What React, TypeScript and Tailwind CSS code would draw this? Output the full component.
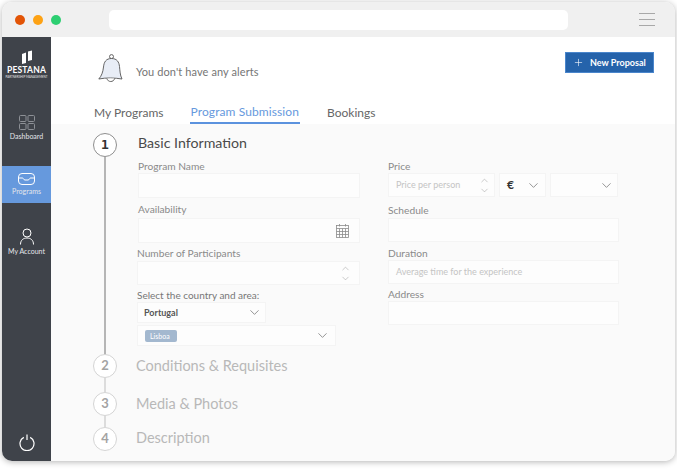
import { ChevronDown, ChevronUp, Plus } from "lucide-react";

const font = "font-['Lato','Noto_Sans',sans-serif]";

function Label({ children, className = "" }: { children: React.ReactNode; className?: string }) {
  return <p className={`text-[10.2px] leading-[14px] text-[#8a8a8a] ${className}`}>{children}</p>;
}

function Box({ className = "", children }: { className?: string; children?: React.ReactNode }) {
  return (
    <div className={`flex items-center bg-[#fdfdfd] border border-[#f4f4f4] ${className}`}>{children}</div>
  );
}

function Spinner() {
  return (
    <div className="flex flex-col ml-auto text-[#8f8f8f]">
      <ChevronUp size={11} strokeWidth={1} className="-mb-[1px]" />
      <ChevronDown size={11} strokeWidth={1} />
    </div>
  );
}

function Caret({ className = "" }: { className?: string }) {
  return <ChevronDown size={15} strokeWidth={1} className={`ml-auto text-[#555] ${className}`} />;
}

function StepCircle({ n, active }: { n: number; active?: boolean }) {
  return (
    <div
      className={
        active
          ? "w-[24px] h-[24px] rounded-full border border-[#8f8f8f] bg-white flex items-center justify-center text-[13px] font-bold text-[#333] font-['DejaVu_Sans_Mono',monospace] shrink-0"
          : "w-[24px] h-[24px] rounded-full border border-[#d4d4d4] bg-white flex items-center justify-center text-[13px] font-bold text-[#a3a3a3] shrink-0"
      }
    >
      {n}
    </div>
  );
}

function NavItem({ label, icon, active }: { label: string; icon: React.ReactNode; active?: boolean }) {
  return (
    <div
      className={`flex flex-col items-center justify-center w-full h-[37px] text-[7px] leading-[9px] text-[#e4e6ea] ${
        active ? "bg-[#6699dd]" : ""
      }`}
    >
      {icon}
      <span className="mt-[2px]">{label}</span>
    </div>
  );
}

export default function App() {
  return (
    <div className={`w-[677px] h-[470px] bg-white pt-[2px] px-[2px] ${font}`}>
      <div className="w-[673px] h-[459px] rounded-[10px] overflow-hidden flex flex-col shadow-[0_1px_6px_rgba(0,0,0,0.3)]">
        {/* barra do browser */}
        <div className="h-[35px] bg-[#f0f0f0] flex items-center pl-[13px] pr-[20px] shrink-0">
          <div className="flex gap-[8px]">
            <span className="w-[10px] h-[10px] rounded-full bg-[#e25406]" />
            <span className="w-[10px] h-[10px] rounded-full bg-[#fda214]" />
            <span className="w-[10px] h-[10px] rounded-full bg-[#2dcf72]" />
          </div>
          <div className="w-[459px] h-[20px] bg-white rounded-[5px] ml-[48px]" />
          <div className="ml-auto flex flex-col gap-[5px] w-[16px]">
            <span className="h-px bg-[#a8a8a8]" />
            <span className="h-px bg-[#a8a8a8]" />
            <span className="h-px bg-[#a8a8a8]" />
          </div>
        </div>

        <div className="flex flex-1 min-h-0">
          {/* sidebar */}
          <div className="w-[49px] bg-[#3f434a] flex flex-col items-center shrink-0">
            <svg width="14" height="14" viewBox="0 0 14 14" className="mt-[13px]" fill="#fff">
              <path d="M2 4 L6 2.6 V13 L2 14 Z" />
              <path d="M8 1.6 L12 0.4 V10 L8 11 Z" />
            </svg>
            <p className="text-[8.5px] leading-[9px] font-bold text-white tracking-[0.2px] mt-[2px]">PESTANA</p>
            <p className="text-[3px] leading-[4px] text-[#e5e5e5] whitespace-nowrap">PARTNERSHIP MANAGEMENT</p>

            <div className="w-full mt-[30px]">
              <NavItem
                label="Dashboard"
                icon={
                  <svg width="16" height="15" viewBox="0 0 16 15" fill="none" stroke="#8d9096" strokeWidth="1">
                    <rect x="0.5" y="0.5" width="6.5" height="6" rx="1" />
                    <rect x="9" y="0.5" width="6.5" height="6" rx="1" />
                    <rect x="0.5" y="8.5" width="6.5" height="6" rx="1" />
                    <rect x="9" y="8.5" width="6.5" height="6" rx="1" />
                  </svg>
                }
              />
            </div>
            <div className="w-full mt-[20px]">
              <NavItem
                active
                label="Programs"
                icon={
                  <svg width="17" height="12" viewBox="0 0 17 12" fill="none" stroke="#fff" strokeWidth="1">
                    <rect x="0.5" y="0.5" width="16" height="11" rx="3.5" />
                    <path d="M1 5 H4.5 C5.5 5 5.5 7 7 7 H10 C11.5 7 11.5 5 12.5 5 H16" />
                  </svg>
                }
              />
            </div>
            <div className="w-full mt-[20px]">
              <NavItem
                label="My Account"
                icon={
                  <svg width="14" height="17" viewBox="0 0 14 17" fill="none" stroke="#fff" strokeWidth="1">
                    <circle cx="7" cy="5" r="4" />
                    <path d="M0.5 16.5 C0.5 12 3.5 10 7 10 C10.5 10 13.5 12 13.5 16.5" />
                  </svg>
                }
              />
            </div>
            <svg width="16" height="17" viewBox="0 0 16 17" fill="none" stroke="#fff" strokeWidth="1.2" className="mt-auto mb-[10px]">
              <path d="M4.8 3.4 A7 7 0 1 0 11.2 3.4" />
              <path d="M8 0.5 V6" />
            </svg>
          </div>

          {/* conteudo */}
          <div className="flex-1 flex flex-col min-w-0">
            <div className="h-[87px] bg-white shrink-0 flex flex-col">
              <div className="flex items-start h-[53px] pl-[47px] pr-[21px]">
                <svg width="25" height="30" viewBox="0 0 25 30" fill="none" stroke="#555" strokeWidth="0.9" className="mt-[17px] shrink-0">
                  <circle cx="13.5" cy="2.6" r="2" fill="#fff" />
                  <path d="M13.5 4.5 C8 4.5 6 8 5.5 13 C5 18 3.5 22 0.8 25 C8 23.5 17 23.8 24 25 C22 21 22 17 21.5 12.5 C21 8 19 4.5 13.5 4.5 Z" fill="#e8edf6" />
                  <path d="M9 24.5 C9.5 28.5 16 28.5 16.5 24.5" fill="#fff" />
                </svg>
                <p className="text-[11px] text-[#757575] ml-[13px] mt-[27px] tracking-[0.1px]">You don't have any alerts</p>
                <button className="ml-auto mt-[15px] w-[89px] h-[21px] bg-[#2563ab] border border-[#4a86cc] flex items-center text-white text-[9px] font-bold pl-[7px]">
                  <Plus size={11} strokeWidth={1.3} />
                  <span className="ml-[6px]">New Proposal</span>
                </button>
              </div>
              <div className="flex pl-[43px] mt-[14px] text-[12px] leading-[17px] text-[#666]">
                <span className="mt-[1px]">My Programs</span>
                <span className="ml-[26px] text-[#6699dd] border-b-2 border-[#5b92de] h-[21px] px-px tracking-[0.1px]">Program Submission</span>
                <span className="ml-[27px] mt-[1px]">Bookings</span>
              </div>
            </div>

            <div className="flex-1 bg-[#fafafa] pl-[42px] pt-[9px] flex flex-col">
              {/* passo 1 */}
              <div className="flex">
                <div className="flex flex-col items-center w-[24px] shrink-0">
                  <StepCircle n={1} active />
                  <div className="w-[2px] h-[198px] bg-[#b5b5b5]" />
                </div>
                <div className="flex ml-[21px] w-[490px]">
                  <div className="w-[222px] shrink-0">
                    <h2 className="text-[14.2px] leading-[18px] text-[#4a4a4a] mt-px">Basic Information</h2>
                    <Label className="mt-[7px]">Program Name</Label>
                    <Box className="h-[25px]" />
                    <Label className="mt-[4px]">Availability</Label>
                    <Box className="h-[25px] mt-[2px] pr-[10px]">
                      <svg width="13" height="14" viewBox="0 0 13 14" fill="none" stroke="#8a8a8a" strokeWidth="0.8" className="ml-auto">
                        <rect x="0.5" y="1.5" width="12" height="12" />
                        <path d="M0.5 4.5 H12.5 M0.5 7.5 H12.5 M0.5 10.5 H12.5 M3.5 4.5 V13.5 M6.5 4.5 V13.5 M9.5 4.5 V13.5 M3.5 0 V2.5 M9.5 0 V2.5" />
                      </svg>
                    </Box>
                    <Label className="mt-[3px] -ml-[1px]">Number of Participants</Label>
                    <Box className="h-[24px] mt-[1px] -ml-[1px] pr-[8px]">
                      <Spinner />
                    </Box>
                    <Label className="mt-[3px] -ml-[1px] text-[#777] text-[10px]">Select the country and area:</Label>
                    <Box className="w-[129px] h-[21px] -ml-[1px] pl-[6px] pr-[3px] text-[9px] text-[#555] font-bold">
                      Portugal
                      <Caret />
                    </Box>
                    <Box className="w-[199px] h-[21px] -ml-[1px] mt-[2px] pl-[7px] pr-[5px]">
                      <span className="w-[32px] h-[12px] rounded-[2px] bg-[#a3b8cf] text-white text-[7px] leading-[12px] pl-[5px]">Lisboa</span>
                      <Caret />
                    </Box>
                  </div>

                  <div className="flex-1 ml-[28px] mt-[26px]">
                    <Label>Price</Label>
                    <div className="flex gap-[4px]">
                      <Box className="w-[107px] h-[24px] pl-[7px] pr-[4px] text-[9px] text-[#c4c4c4]">
                        Price per person
                        <Spinner />
                      </Box>
                      <Box className="w-[47px] h-[24px] pl-[7px] pr-[4px] text-[12px] font-bold text-[#333]">
                        €
                        <Caret />
                      </Box>
                      <Box className="w-[68px] h-[24px] pr-[3px]">
                        <Caret />
                      </Box>
                    </div>
                    <Label className="mt-[6px]">Schedule</Label>
                    <Box className="h-[24px] w-[231px] mt-[1px]" />
                    <Label className="mt-[4px]">Duration</Label>
                    <Box className="h-[24px] w-[231px] pl-[7px] text-[9px] text-[#c4c4c4]">
                      Average time for the experience
                    </Box>
                    <Label className="mt-[3px]">Address</Label>
                    <Box className="h-[24px] w-[231px]" />
                  </div>
                </div>
              </div>

              {/* passos 2-4 */}
              <div className="flex items-center -mt-[1px]">
                <StepCircle n={2} />
                <span className="ml-[19px] text-[14.5px] text-[#b8b8b8]">Conditions &amp; Requisites</span>
              </div>
              <div className="w-[2px] h-[14px] bg-[#dcdcdc] ml-[11px]" />
              <div className="flex items-center">
                <StepCircle n={3} />
                <span className="ml-[19px] text-[14.5px] text-[#b8b8b8]">Media &amp; Photos</span>
              </div>
              <div className="w-[2px] h-[11px] bg-[#dcdcdc] ml-[11px]" />
              <div className="flex items-center">
                <StepCircle n={4} />
                <span className="ml-[19px] text-[14.5px] leading-[18px] -mt-[3px] text-[#b8b8b8]">Description</span>
              </div>
            </div>
          </div>
        </div>
      </div>
    </div>
  );
}
